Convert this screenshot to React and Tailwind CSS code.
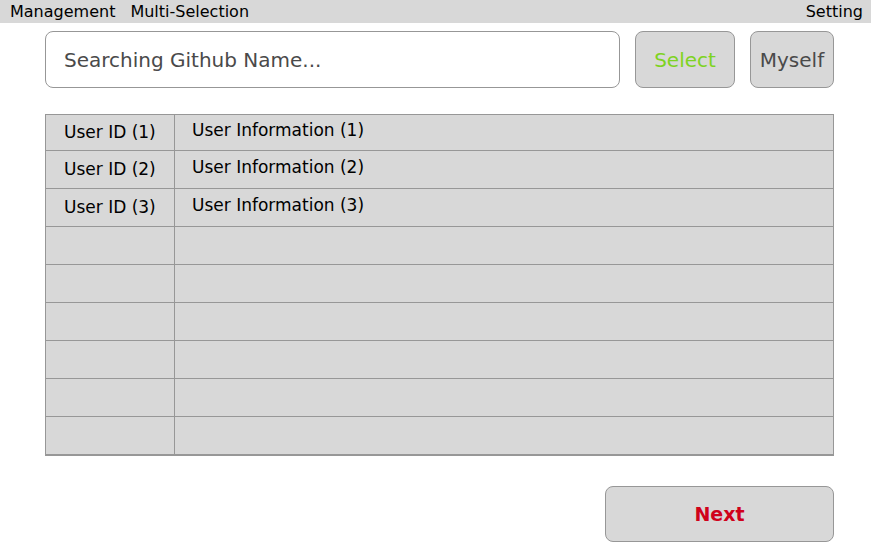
import React from 'react';

const users = [
    { id: 'User ID (1)', info: 'User Information (1)' },
    { id: 'User ID (2)', info: 'User Information (2)' },
    { id: 'User ID (3)', info: 'User Information (3)' },
    { id: '', info: '' },
    { id: '', info: '' },
    { id: '', info: '' },
    { id: '', info: '' },
    { id: '', info: '' },
    { id: '', info: '' },
];

const App = () => {
    return (
        <div className="h-[557px] w-[871px] bg-white font-['DejaVu_Sans',sans-serif] text-black">
            {/* Top bar */}
            <div className="flex h-[23px] items-center bg-[#d8d8d8] pl-[10px] pr-[8px] text-[16px] leading-none">
                <span>Management</span>
                <span className="ml-[15px]">Multi-Selection</span>
                <span className="ml-auto">Setting</span>
            </div>

            {/* Search row */}
            <div className="mt-[8px] flex pl-[45px] pr-[37px]">
                <div className="flex h-[57px] w-[575px] shrink-0 items-center rounded-[8px] border border-[#979797] pl-[18px] text-[20px] text-[#4a4a4a]">
                    Searching Github Name...
                </div>
                <button className="ml-[15px] h-[57px] w-[100px] shrink-0 rounded-[8px] border border-[#979797] bg-[#d8d8d8] text-[20px] text-[#7ed321]">
                    Select
                </button>
                <button className="ml-[15px] h-[57px] w-[84px] shrink-0 rounded-[8px] border border-[#979797] bg-[#d8d8d8] text-[20px] text-[#4a4a4a]">
                    Myself
                </button>
            </div>

            {/* Table */}
            <div className="ml-[45px] mr-[37px] mt-[26px] border-x border-t border-b-2 border-[#979797] bg-[#d8d8d8]">
                {users.map((u, i) => (
                    <div
                        key={i}
                        className={`flex ${i === 0 ? 'h-[35px]' : 'h-[38px] border-t border-[#979797]'} text-[17px]`}
                    >
                        <div className="flex w-[129px] items-center border-r border-[#979797] pl-[18px]">{u.id}</div>
                        <div className="flex flex-1 items-center pb-[3px] pl-[17px]">{u.info}</div>
                    </div>
                ))}
            </div>

            {/* Next */}
            <div className="mt-[30px] flex justify-end pr-[37px]">
                <button className="h-[56px] w-[229px] rounded-[8px] border border-[#979797] bg-[#d8d8d8] text-[19px] font-bold text-[#d0021b]">
                    Next
                </button>
            </div>
        </div>
    );
};

export default App;
